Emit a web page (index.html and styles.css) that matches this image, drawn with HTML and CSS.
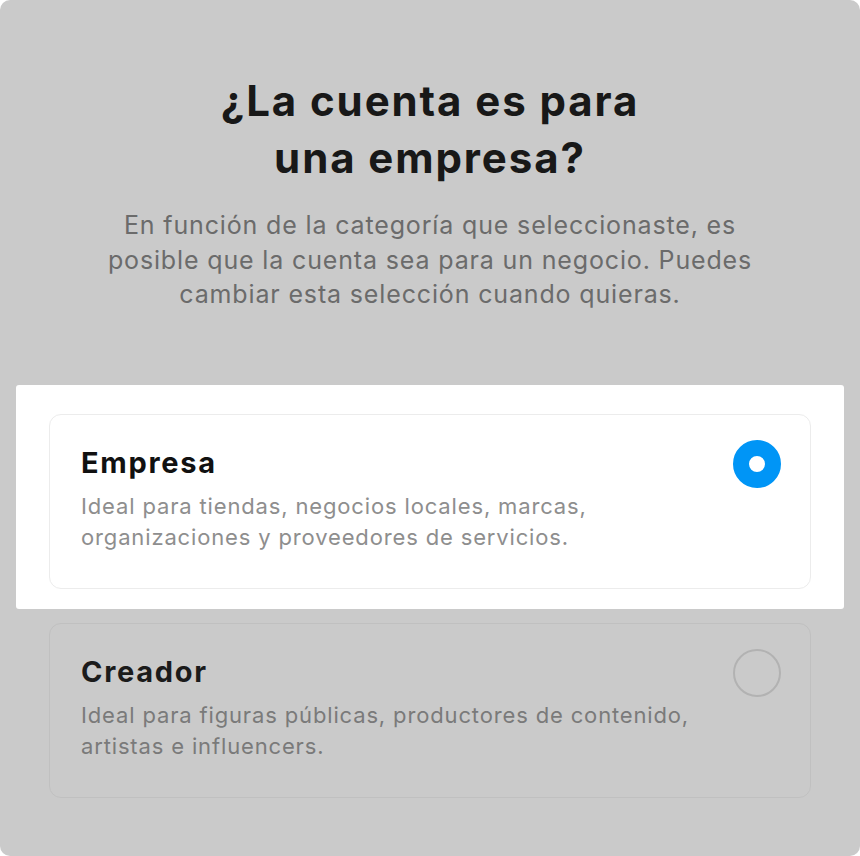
FILE: index.html
```html
<!DOCTYPE html>
<html lang="es">
<head>
  <meta charset="UTF-8">
  <meta name="viewport" content="width=device-width, initial-scale=1.0">
  <title>Tipo de cuenta</title>
  <link rel="stylesheet" href="styles.css">
</head>
<body>
  <div class="screen">
    <h1>¿La cuenta es para<br>una empresa?</h1>
    <p class="lead">En función de la categoría que seleccionaste, es posible que la cuenta sea para un negocio. Puedes cambiar esta selección cuando quieras.</p>

    <!-- highlighted choice sits on a white panel -->
    <div class="spotlight">
      <label class="option">
        <div class="option-text">
          <strong>Empresa</strong>
          <span>Ideal para tiendas, negocios locales, marcas, organizaciones y proveedores de servicios.</span>
        </div>
        <span class="radio checked"></span>
      </label>
    </div>

    <div class="options">
      <label class="option">
        <div class="option-text">
          <strong>Creador</strong>
          <span>Ideal para figuras públicas, productores de contenido, artistas e influencers.</span>
        </div>
        <span class="radio"></span>
      </label>
    </div>
  </div>
</body>
</html>
```

FILE: styles.css
```css
html, body {
  margin: 0;
  background: #fff;
}

body {
  font-family: Inter, "Noto Sans", sans-serif;
  -webkit-font-smoothing: antialiased;
}

.screen {
  height: 856px;
  background: #cacaca;
  border-radius: 10px;
  overflow: hidden;
  padding-top: 72px;
  box-sizing: border-box;
}

h1 {
  margin: 0;
  text-align: center;
  font-size: 42px;
  line-height: 57px;
  font-weight: 700;
  color: #181818;
  letter-spacing: 1.9px;
}

.lead {
  margin: 22px auto 0;
  width: 665px;
  text-align: center;
  font-size: 25px;
  line-height: 34.5px;
  color: #6b6b6b;
  letter-spacing: 0.85px;
}

.spotlight {
  margin: 73px 16px 0;
  background: #fff;
  border-radius: 3px;
  padding: 29px 33px 20px;
}

.options {
  margin: 14px 49px 0;
}

.option {
  display: flex;
  justify-content: space-between;
  align-items: flex-start;
  height: 175px;
  box-sizing: border-box;
  padding: 28px 29px 0 31px;
  border: 1.5px solid #ececec;
  border-radius: 12px;
}

.options .option {
  border-color: #c0c0c0;
}

.option-text {
  display: flex;
  flex-direction: column;
}

.option-text strong {
  font-size: 29px;
  line-height: 40px;
  font-weight: 700;
  color: #111;
  letter-spacing: 1.7px;
}

.option-text span {
  margin-top: 8px;
  width: 630px;
  font-size: 22px;
  line-height: 31px;
  color: #8e8e8e;
  letter-spacing: 0.85px;
}

.options .option-text strong {
  color: #1b1b1b;
}

.options .option-text span {
  color: #7a7a7a;
}

.radio {
  flex: none;
  width: 48px;
  height: 48px;
  margin-top: -3px;
  border-radius: 50%;
  box-sizing: border-box;
  border: 2.5px solid #b2b2b2;
}

.radio.checked {
  border: 16px solid #0095f6;
  background: #fff;
}
```
